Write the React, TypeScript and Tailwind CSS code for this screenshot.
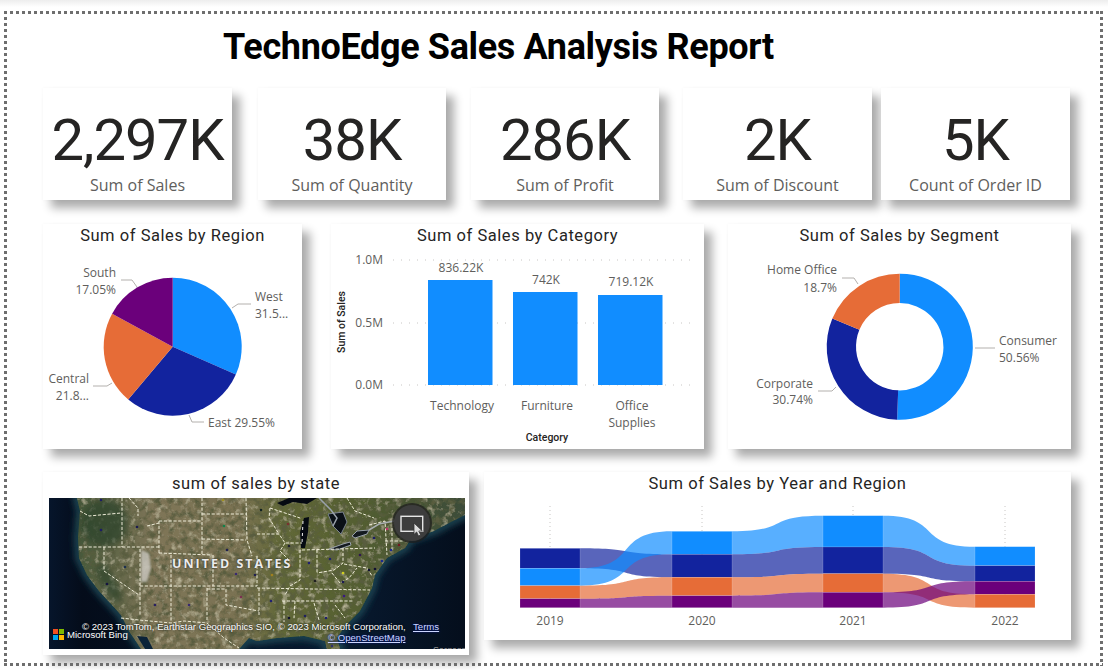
const BLUE = "#118DFF";
const NAVY = "#12239E";
const ORANGE = "#E66C37";
const PURPLE = "#6B007B";

const kpis = [
  { value: "2,297K", label: "Sum of Sales", cls: "w-[189px]" },
  { value: "38K", label: "Sum of Quantity", cls: "ml-[26px] w-[188px]" },
  { value: "286K", label: "Sum of Profit", cls: "ml-[25px] w-[188px]" },
  { value: "2K", label: "Sum of Discount", cls: "ml-[24px] w-[189px]" },
  { value: "5K", label: "Count of Order ID", cls: "ml-[9px] w-[189px]" },
];

// clockwise from 12 o'clock, degrees
function sector(cx: number, cy: number, r: number, inner: number, from: number, to: number) {
  const pt = (rad: number, a: number) => {
    const t = ((a - 90) * Math.PI) / 180;
    return `${(cx + rad * Math.cos(t)).toFixed(2)} ${(cy + rad * Math.sin(t)).toFixed(2)}`;
  };
  const large = to - from > 180 ? 1 : 0;
  if (inner === 0) {
    return `M${cx} ${cy} L${pt(r, from)} A${r} ${r} 0 ${large} 1 ${pt(r, to)} Z`;
  }
  return `M${pt(r, from)} A${r} ${r} 0 ${large} 1 ${pt(r, to)} L${pt(inner, to)} A${inner} ${inner} 0 ${large} 0 ${pt(inner, from)} Z`;
}

function Slices({ cx, cy, r, inner, parts }: { cx: number; cy: number; r: number; inner: number; parts: [number, string][] }) {
  let start = 0;
  return (
    <>
      {parts.map(([pct, color]) => {
        const end = start + (pct / 100) * 360;
        const d = sector(cx, cy, r, inner, start, end);
        start = end;
        return <path key={color} d={d} fill={color} />;
      })}
    </>
  );
}

function Label({ x, y, anchor = "start", children }: { x: number; y: number; anchor?: "start" | "end" | "middle"; children: string }) {
  return (
    <text x={x} y={y} textAnchor={anchor} fontSize="12" fill="#605E5C" fontFamily="'Open Sans', sans-serif">
      {children}
    </text>
  );
}

function Leader({ points }: { points: string }) {
  return <polyline points={points} fill="none" stroke="#b3b0ad" strokeWidth="1" />;
}

function Card({ title, className, children }: { title: string; className: string; children: React.ReactNode }) {
  return (
    <div className={`bg-white shadow-[8px_8px_9px_rgba(0,0,0,0.33),0_0_3px_rgba(0,0,0,0.04)] ${className}`}>
      <div className="flex h-[24px] items-center justify-center text-[16.5px] leading-none tracking-[0.55px] text-[#252423] font-['Roboto',sans-serif]">
        {title}
      </div>
      {children}
    </div>
  );
}

function RegionPie() {
  return (
    <svg className="block" width="259" height="201" viewBox="43 248 259 201">
      <Slices cx={172.7} cy={346.7} r={69} inner={0} parts={[[31.6, BLUE], [29.55, NAVY], [21.8, ORANGE], [17.05, PURPLE]]} />
      <Leader points="232,308 238,304 251,304" />
      <Leader points="112,383 107,386 93,386" />
      <Leader points="137,287 132,280 121,280" />
      <Leader points="189,415 192,422 204,422" />
      <Label x={116} y={277} anchor="end">South</Label>
      <Label x={116} y={294} anchor="end">17.05%</Label>
      <Label x={255} y={301}>West</Label>
      <Label x={255} y={318}>31.5...</Label>
      <Label x={89} y={383} anchor="end">Central</Label>
      <Label x={89} y={400} anchor="end">21.8...</Label>
      <Label x={208} y={427}>East 29.55%</Label>
    </svg>
  );
}

function CategoryBars() {
  const bars = [
    { x: 428, top: 280, label: "836.22K", ly: 272 },
    { x: 513, top: 292, label: "742K", ly: 284 },
    { x: 598, top: 295, label: "719.12K", ly: 286 },
  ];
  return (
    <svg className="block" width="373" height="201" viewBox="331 248 373 201">
      {[260, 323, 385].map((y) => (
        <line key={y} x1="393" x2="697" y1={y} y2={y} stroke="#c8c6c4" strokeWidth="1" strokeDasharray="1 7" />
      ))}
      <Label x={383} y={264} anchor="end">1.0M</Label>
      <Label x={383} y={327} anchor="end">0.5M</Label>
      <Label x={383} y={389} anchor="end">0.0M</Label>
      {bars.map((b) => (
        <g key={b.x}>
          <rect x={b.x} y={b.top} width="64.5" height={385 - b.top} fill={BLUE} />
          <Label x={b.x + 33} y={b.ly} anchor="middle">{b.label}</Label>
        </g>
      ))}
      <Label x={462} y={410} anchor="middle">Technology</Label>
      <Label x={547} y={410} anchor="middle">Furniture</Label>
      <Label x={632} y={410} anchor="middle">Office</Label>
      <Label x={632} y={427} anchor="middle">Supplies</Label>
      <text x={547} y={441} textAnchor="middle" fontSize="10.5" fontWeight="500" fill="#252423" fontFamily="Roboto, sans-serif">Category</text>
      <text transform="translate(345 322) rotate(-90)" textAnchor="middle" fontSize="10.5" fontWeight="500" fill="#252423" fontFamily="Roboto, sans-serif">Sum of Sales</text>
    </svg>
  );
}

function SegmentDonut() {
  return (
    <svg className="block" width="343" height="201" viewBox="728 248 343 201">
      <Slices cx={899.7} cy={346.7} r={73} inner={43.7} parts={[[50.56, BLUE], [30.74, NAVY], [18.7, ORANGE]]} />
      <Leader points="975,348 995,348" />
      <Leader points="836,387 832,391 818,391" />
      <Leader points="858,284 854,278 842,278" />
      <Label x={999} y={345}>Consumer</Label>
      <Label x={999} y={362}>50.56%</Label>
      <Label x={813} y={388} anchor="end">Corporate</Label>
      <Label x={813} y={404} anchor="end">30.74%</Label>
      <Label x={837} y={274} anchor="end">Home Office</Label>
      <Label x={837} y={292} anchor="end">18.7%</Label>
    </svg>
  );
}

const stateLines = [
  "31,13 40,18 72,15", "73,0 73,49", "30,49 110,49", "55,49 55,73 90,97", "91,51 91,117", "91,88 208,88",
  "110,23 152,23", "110,23 110,55", "110,55 163,57", "122,57 122,123", "153,0 153,56", "153,16 197,16",
  "153,41 197,42", "197,0 198,42 203,58", "164,57 164,88", "158,90 158,123", "158,91 177,91 177,107 210,113",
  "208,58 208,88", "80,0 89,10 89,18", "98,28 110,25", "72,120 90,122 122,125 135,123 158,125 175,140 190,150",
  "208,36 230,36 236,45 253,45", "221,10 220,20 230,36", "221,10 251,20", "253,52 326,50", "251,52 251,82 241,88 236,97",
  "236,45 231,53 241,63", "208,90 321,92", "210,90 210,117", "233,103 305,103", "268,52 268,75", "294,50 294,65 285,72 268,75",
  "295,66 318,70 323,78", "283,75 291,85 300,80 308,70", "246,103 245,120", "265,105 270,122", "286,107 296,120",
  "235,103 235,124", "320,27 336,23 338,57", "336,43 355,43", "343,30 343,52", "298,0 306,13 325,20",
];

const cities: [number, number, string][] = [
  [52, 32, "#1c1c66"], [88, 29, "#1c1c50"], [76, 69, "#1c3050"], [58, 86, "#141440"], [106, 107, "#2a2060"], [140, 107, "#3a2a70"],
  [175, 28, "#12804a"], [178, 52, "#202050"], [187, 76, "#3a2a70"], [192, 99, "#7a3050"], [174, 2, "#a09020"], [52, 2, "#1c1c66"],
  [240, 48, "#202030"], [260, 65, "#202070"], [281, 61, "#202070"], [311, 57, "#301850"], [294, 84, "#1c1c50"], [320, 72, "#101030"],
  [326, 71, "#101030"], [333, 63, "#1a2a90"], [295, 98, "#3a1a80"], [222, 103, "#202070"], [240, 120, "#101030"], [256, 118, "#202060"],
  [277, 120, "#202070"], [338, 31, "#c0306a"], [325, 40, "#1c1c66"], [342, 52, "#1a2a90"], [350, 47, "#701820"], [294, 75, "#d0d020"],
  [223, 77, "#a08020"], [206, 77, "#202050"], [239, 26, "#7a3030"], [212, 12, "#102020"], [266, 83, "#202020"], [283, 148, "#303070"],
];

function UsMap() {
  const land =
    "M28 0 L31 13 L29 40 L30 60 L38 77 L50 93 L63 107 L72 117 L80 133 L92 151 L190 151 L200 140 L208 143 L228 140 L255 138 L276 143 L278 151 L291 151 L288 140 L296 128 L311 113 L323 90 L326 77 L338 60 L356 50 L362 41 L385 33 L400 25 L416 17 L416 0 Z";
  return (
    <div className="relative h-[151px] w-[416px] overflow-hidden bg-[#061226]">
      <svg className="absolute inset-0" width="416" height="151" viewBox="0 0 416 151">
        <defs>
          <linearGradient id="landTone" x1="0" x2="1" y1="0" y2="0">
            <stop offset="0" stopColor="#46583a" />
            <stop offset="0.2" stopColor="#7f7558" />
            <stop offset="0.42" stopColor="#7a7252" />
            <stop offset="0.52" stopColor="#626838" />
            <stop offset="0.72" stopColor="#545f30" />
            <stop offset="1" stopColor="#3c4c3a" />
          </linearGradient>
          <linearGradient id="sea" x1="0" x2="1" y1="0" y2="0">
            <stop offset="0" stopColor="#06152b" />
            <stop offset="0.08" stopColor="#040c1a" />
            <stop offset="0.7" stopColor="#081a30" />
            <stop offset="1" stopColor="#040e1c" />
          </linearGradient>
          <filter id="mottle" x="0" y="0" width="100%" height="100%">
            <feTurbulence type="fractalNoise" baseFrequency="0.15" numOctaves="4" seed="7" result="noise" />
            <feColorMatrix in="noise" type="matrix" values="0 0 0 0 0.1  0 0 0 0 0.11  0 0 0 0 0.05  3 0 0 0 -1.3" result="dark" />
            <feColorMatrix in="noise" type="matrix" values="0 0 0 0 0.55  0 0 0 0 0.52  0 0 0 0 0.36  0 2 0 0 -1.05" result="pale" />
            <feComposite in="dark" in2="SourceAlpha" operator="in" result="darkClip" />
            <feComposite in="pale" in2="SourceAlpha" operator="in" result="paleClip" />
            <feMerge>
              <feMergeNode in="SourceGraphic" />
              <feMergeNode in="paleClip" />
              <feMergeNode in="darkClip" />
            </feMerge>
          </filter>
          <filter id="soft">
            <feGaussianBlur stdDeviation="3" />
          </filter>
          <filter id="softer">
            <feGaussianBlur stdDeviation="1" />
          </filter>
        </defs>
        <rect width="416" height="151" fill="url(#sea)" />
        <path d={land} fill="none" stroke="#1c4452" strokeWidth="8" filter="url(#soft)" />
        <path d={land} fill="url(#landTone)" filter="url(#mottle)" />
        <ellipse cx="55" cy="25" rx="24" ry="24" fill="#2c4229" opacity="0.7" filter="url(#soft)" />
        <ellipse cx="60" cy="85" rx="7" ry="22" fill="#2c4229" opacity="0.65" filter="url(#soft)" transform="rotate(-30 60 85)" />
        <path d="M92 52 L100 55 L102 70 L98 84 L92 84 Z" fill="#c6c3ba" opacity="0.85" filter="url(#softer)" />
        <path d="M88 138 L98 139 L104 151 L96 151 Z" fill="#0b2338" />
        {/* great lakes */}
        <path d="M228 5 L240 0 L268 0 L258 6 L244 4 L234 8 Z" fill="#050a12" />
        <path d="M252 50 L251 34 L255 20 L260 19 L259 34 L256 50 Z" fill="#050a12" />
        <path d="M279 16 L294 14 L298 24 L292 36 L284 28 Z" fill="#0a1016" stroke="#7c8490" strokeWidth="1" />
        <path d="M270 0 L282 12 L288 20 L284 28" fill="none" stroke="#9aa2ac" strokeWidth="1.5" />
        <path d="M280 51 L294 46 L301 44 L302 47 L288 52 Z" fill="#141a20" stroke="#9aa2ac" strokeWidth="1" />
        <path d="M303 38 L308 33 L320 32 L318 36 L306 40 Z" fill="#141a20" stroke="#9aa2ac" strokeWidth="1" />
        <path d="M320 32 L330 26 L345 23 L353 21" fill="none" stroke="#a8adb0" strokeWidth="1.5" />
        <path d="M254 23 L253 46" fill="none" stroke="#f0f0f0" strokeWidth="1" strokeDasharray="3 3" />
        <g fill="none" stroke="#eeecd8" strokeWidth="1" strokeDasharray="3.2 1.6">
          {stateLines.map((p) => (
            <polyline key={p} points={p} />
          ))}
        </g>
        {cities.map(([cx, cy, fill]) => (
          <circle key={`${cx}-${cy}`} cx={cx} cy={cy} r="1.3" fill={fill} />
        ))}
      </svg>
      <div className="absolute left-[123px] top-[58px] text-[12.5px] leading-[16px] font-bold tracking-[2px] text-[#ececec] font-['Open_Sans',sans-serif] [text-shadow:0_0_2px_#222]">
        UNITED STATES
      </div>
      <div className="absolute left-[33px] top-[125px] whitespace-nowrap text-[9.6px] leading-[7px] text-white font-['Liberation_Sans',sans-serif] [text-shadow:0_0_2px_#000]">
        © 2023 TomTom, Earthstar Geographics SIO, © 2023 Microsoft Corporation,
      </div>
      <div className="absolute left-[364px] top-[125px] text-[9.6px] leading-[7px] text-[#ccd6ff] underline font-['Liberation_Sans',sans-serif] [text-shadow:0_0_2px_#001080]">
        Terms
      </div>
      <div className="absolute left-[279px] top-[136px] whitespace-nowrap text-[9.6px] leading-[8px] text-[#ccd6ff] underline font-['Liberation_Sans',sans-serif] [text-shadow:0_0_2px_#001080]">
        © OpenStreetMap
      </div>
      <div className="absolute left-[4px] top-[131px] flex items-center gap-[3px]">
        <div className="grid h-[11px] w-[11px] grid-cols-2 gap-[1px]">
          <span className="bg-[#f25022]" />
          <span className="bg-[#7fba00]" />
          <span className="bg-[#00a4ef]" />
          <span className="bg-[#ffb900]" />
        </div>
        <span className="text-[9.6px] leading-[8px] text-white font-['Liberation_Sans',sans-serif]">Microsoft Bing</span>
      </div>
      <div className="absolute left-[384px] top-[146px] text-[9px] leading-[12px] text-[#9a9a9a] font-['Liberation_Sans',sans-serif]">Sargasso</div>
      <div className="absolute left-[345px] top-[7px] flex h-[36px] w-[36px] items-center justify-center rounded-full bg-[#3d3d3d] shadow-[0_0_0_2px_rgba(30,30,30,0.75)]">
        <svg width="36" height="36" viewBox="0 0 36 36">
          <rect x="7" y="11.3" width="21.7" height="15" fill="none" stroke="#e6e6e6" strokeWidth="1.4" />
          <path d="M20 18 L20 29.5 L22.6 27 L24.5 31 L26.7 30 L24.8 26 L28.4 26 Z" fill="#dcdcdc" stroke="#333" strokeWidth="0.8" />
        </svg>
      </div>
    </div>
  );
}

type Band = { color: string; t: number; b: number };

const columns: { x: number; label: string; gridTop: number; bands: Band[] }[] = [
  {
    x: 520, label: "2019", gridTop: 506,
    bands: [
      { color: NAVY, t: 548.3, b: 568.3 },
      { color: BLUE, t: 568.3, b: 585.7 },
      { color: ORANGE, t: 585.7, b: 598.7 },
      { color: PURPLE, t: 598.7, b: 607.7 },
    ],
  },
  {
    x: 672, label: "2020", gridTop: 506,
    bands: [
      { color: BLUE, t: 531.3, b: 554.3 },
      { color: NAVY, t: 554.3, b: 577.3 },
      { color: ORANGE, t: 577.3, b: 595.7 },
      { color: PURPLE, t: 595.7, b: 607.7 },
    ],
  },
  {
    x: 823, label: "2021", gridTop: 506,
    bands: [
      { color: BLUE, t: 515.7, b: 547 },
      { color: NAVY, t: 547, b: 573.7 },
      { color: ORANGE, t: 573.7, b: 592.3 },
      { color: PURPLE, t: 592.3, b: 607.7 },
    ],
  },
  {
    x: 975, label: "2022", gridTop: 506,
    bands: [
      { color: BLUE, t: 546.7, b: 565.7 },
      { color: NAVY, t: 565.7, b: 581.3 },
      { color: PURPLE, t: 581.3, b: 594.3 },
      { color: ORANGE, t: 594.3, b: 607.7 },
    ],
  },
];

function ribbon(x0: number, x1: number, a: Band, z: Band) {
  const c0 = x0 + (x1 - x0) * 0.65;
  const c1 = x0 + (x1 - x0) * 0.35;
  return `M${x0} ${a.t} C${c0} ${a.t} ${c1} ${z.t} ${x1} ${z.t} L${x1} ${z.b} C${c1} ${z.b} ${c0} ${a.b} ${x0} ${a.b} Z`;
}

function RibbonChart() {
  const colW = 60;
  return (
    <svg className="block" width="587" height="144" viewBox="484 496 587 144">
      {columns.map((c) => (
        <line key={c.label} x1={c.x + 30} x2={c.x + 30} y1={c.gridTop} y2="609" stroke="#c8c6c4" strokeWidth="1" strokeDasharray="1 3" />
      ))}
      {columns.slice(0, -1).map((c, i) =>
        c.bands.map((band) => {
          const next = columns[i + 1];
          const target = next.bands.find((n) => n.color === band.color)!;
          return (
            <path key={`${c.label}-${band.color}`} d={ribbon(c.x + colW, next.x, band, target)} fill={band.color} fillOpacity="0.7" />
          );
        })
      )}
      {columns.map((c) =>
        c.bands.map((band) => (
          <rect key={`${c.label}-${band.color}`} x={c.x} y={band.t} width={colW} height={band.b - band.t} fill={band.color} stroke="#fff" strokeOpacity="0.25" strokeWidth="0.6" />
        ))
      )}
      {columns.map((c) => (
        <Label key={c.label} x={c.x + 30} y={625} anchor="middle">{c.label}</Label>
      ))}
    </svg>
  );
}

export default function App() {
  return (
    <div className="relative flex h-[670px] w-[1108px] flex-col overflow-hidden bg-[linear-gradient(#ededed,#ffffff_7px)]">
      {/* dotted report frame */}
      <div className="absolute left-[4px] top-[11px] h-[3px] w-[1099px] bg-[repeating-linear-gradient(90deg,#6e6e6e_0_3px,transparent_3px_6px)]" />
      <div className="absolute left-[4px] top-[663px] h-[3px] w-[1099px] bg-[repeating-linear-gradient(90deg,#6e6e6e_0_3px,transparent_3px_6px)]" />
      <div className="absolute left-[4px] top-[11px] h-[655px] w-[3px] bg-[repeating-linear-gradient(180deg,#6e6e6e_0_3px,transparent_3px_6px)]" />
      <div className="absolute left-[1100px] top-[11px] h-[655px] w-[3px] bg-[repeating-linear-gradient(180deg,#6e6e6e_0_3px,transparent_3px_6px)]" />

      <div className="flex h-[88px] items-center pl-[223px] pt-[6px] text-[36px] font-bold leading-none tracking-[-0.35px] text-black font-['Roboto',sans-serif]">
        TechnoEdge Sales Analysis Report
      </div>

      <div className="flex pl-[43px]">
        {kpis.map((k) => (
          <div
            key={k.label}
            className={`flex h-[112px] flex-col items-center bg-white shadow-[8px_8px_9px_rgba(0,0,0,0.33),0_0_3px_rgba(0,0,0,0.04)] ${k.cls}`}
          >
            <div className="mt-[17px] h-[70px] text-[58px] leading-[70px] tracking-[-1px] text-[#252423] font-['Roboto',sans-serif]">{k.value}</div>
            <div className="text-[16px] leading-[20px] text-[#605E5C] font-['Open_Sans',sans-serif]">{k.label}</div>
          </div>
        ))}
      </div>

      <div className="mt-[24px] flex pl-[43px]">
        <Card title="Sum of Sales by Region" className="h-[225px] w-[259px]">
          <RegionPie />
        </Card>
        <Card title="Sum of Sales by Category" className="ml-[29px] h-[225px] w-[373px]">
          <CategoryBars />
        </Card>
        <Card title="Sum of Sales by Segment" className="ml-[24px] h-[225px] w-[343px]">
          <SegmentDonut />
        </Card>
      </div>

      <div className="mt-[23px] flex items-start pl-[43px]">
        <Card title="sum of sales by state" className="h-[183px] w-[426px] px-[6px]">
          <div className="pt-[2px]">
            <UsMap />
          </div>
        </Card>
        <Card title="Sum of Sales by Year and Region" className="ml-[15px] h-[168px] w-[587px]">
          <RibbonChart />
        </Card>
      </div>
    </div>
  );
}
